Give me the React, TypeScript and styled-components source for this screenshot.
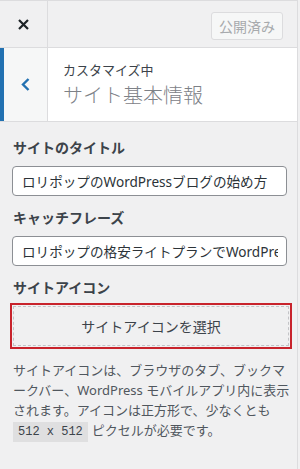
import React from 'react';
import styled, { createGlobalStyle } from 'styled-components';

const GlobalStyle = createGlobalStyle`
body {
  margin: 0;
  background: #f0f0f1;
  font-family: "Noto Sans", "Noto Sans CJK JP", sans-serif;
}
`;

const Sidebar = styled.div`
width: 298px;
height: 469px;
box-sizing: border-box;
border-right: 1px solid #dcdcde;
background: #f0f0f1;
overflow: hidden;
`;

const Header = styled.div`
display: flex;
align-items: flex-start;
height: 48px;
box-sizing: border-box;
border-top: 1px solid #dcdcde;
border-bottom: 1px solid #dcdcde;
`;

const CloseButton = styled.div`
width: 48px;
height: 46px;
box-sizing: border-box;
border-right: 1px solid #dcdcde;
display: flex;
align-items: center;
justify-content: center;
`;

const PublishButton = styled.div`
margin: 11px 14px 0 auto;
width: 72px;
height: 28px;
box-sizing: border-box;
border: 1px solid #dcdcde;
border-radius: 3px;
background: #f6f7f7;
color: #a7aaad;
font-size: 14px;
display: flex;
align-items: center;
justify-content: center;
`;

const Section = styled.div`
display: flex;
background: #fff;
border-bottom: 1px solid #dcdcde;
height: 74px;
box-sizing: border-box;
`;

const BackButton = styled.div`
width: 48px;
box-sizing: border-box;
border-left: 4px solid #2271b1;
border-right: 1px solid #dcdcde;
background: #f6f7f7;
display: flex;
align-items: center;
justify-content: center;
padding-right: 1px;
`;

const SectionTitle = styled.div`
padding: 13px 0 0 15px;
display: flex;
flex-direction: column;
`;

const Eyebrow = styled.span`
font-size: 13px;
line-height: 18px;
color: #3c434a;
`;

const Title = styled.span`
font-size: 20px;
line-height: 28px;
margin-top: 3px;
font-weight: 300;
color: #7d8187;
`;

const Content = styled.div`
padding: 16px 10px 0 12px;
`;

const Field = styled.div`
margin-bottom: 12px;
`;

const Label = styled.div`
font-size: 14px;
line-height: 20px;
font-weight: 700;
color: #3c434a;
margin: 0 0 8px 1px;
`;

const TextInput = styled.input`
display: block;
width: 100%;
height: 30px;
box-sizing: border-box;
border: 1px solid #8c8f94;
border-radius: 4px;
background: #fff;
padding: 0 8px 0 9px;
font-family: inherit;
font-size: 13.6px;
color: #2c3338;
outline: none;
`;

const SelectButton = styled.div`
margin: 0 -2px 0 1px;
height: 40px;
box-sizing: border-box;
border: 1px dashed #c3c4c7;
outline: 2px solid #c8232c;
outline-offset: 1px;
display: flex;
align-items: center;
justify-content: center;
font-size: 14px;
color: #3c434a;
`;

const Description = styled.p`
margin: 14px -10px 0 1px;
font-size: 13px;
line-height: 20px;
color: #50575e;
white-space: nowrap;
`;

const Code = styled.code`
font-family: "Liberation Mono", "DejaVu Sans Mono", monospace;
font-size: 12px;
background: rgba(0, 0, 0, 0.07);
padding: 3px 5px;
margin-right: 4px;
color: #3c434a;
`;

const App = () => (
  <>
    <GlobalStyle />
    <Sidebar>
      <Header>
        <CloseButton>
          <svg width="11" height="11" viewBox="0 0 11 11">
            <path d="M1 1 L10 10 M10 1 L1 10" stroke="#1d2327" strokeWidth="2.2" />
          </svg>
        </CloseButton>
        <PublishButton>公開済み</PublishButton>
      </Header>
      <Section>
        <BackButton>
          <svg width="9" height="13" viewBox="0 0 9 13">
            <path d="M7.5 1 L2 6.5 L7.5 12" fill="none" stroke="#2271b1" strokeWidth="2.4" />
          </svg>
        </BackButton>
        <SectionTitle>
          <Eyebrow>カスタマイズ中</Eyebrow>
          <Title>サイト基本情報</Title>
        </SectionTitle>
      </Section>
      <Content>
        <Field>
          <Label>サイトのタイトル</Label>
          <TextInput defaultValue="ロリポップのWordPressブログの始め方" />
        </Field>
        <Field>
          <Label>キャッチフレーズ</Label>
          <TextInput defaultValue="ロリポップの格安ライトプランでWordPressブログ" />
        </Field>
        <Field>
          <Label>サイトアイコン</Label>
          <SelectButton>サイトアイコンを選択</SelectButton>
          <Description>
            サイトアイコンは、ブラウザのタブ、ブックマ<br />
            ークバー、WordPress モバイルアプリ内に表示<br />
            されます。アイコンは正方形で、少なくとも<br />
            <Code>512 x 512</Code>ピクセルが必要です。
          </Description>
        </Field>
      </Content>
    </Sidebar>
  </>
);

export default App;
